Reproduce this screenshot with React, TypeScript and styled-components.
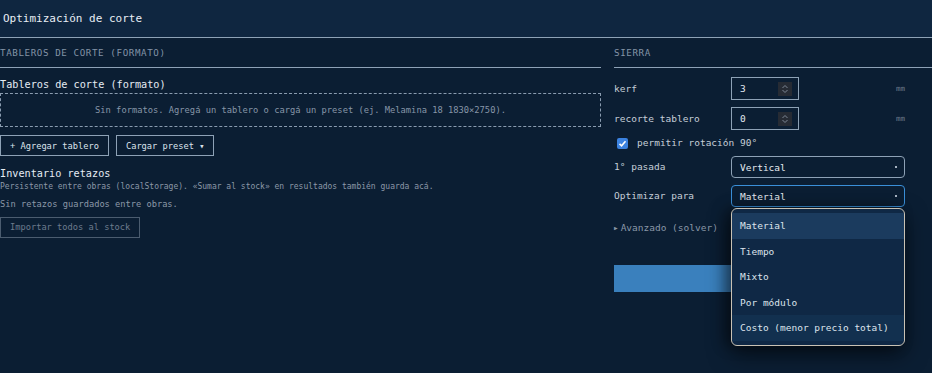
import React from "react";
import styled, { createGlobalStyle } from "styled-components";

const GlobalStyle = createGlobalStyle`
  html, body {
    margin: 0;
    padding: 0;
    background: #0b1e33;
  }
  body {
    font-family: "DejaVu Sans Mono", "Liberation Mono", monospace;
    color: #d9e1ea;
    overflow: hidden;
  }
`;

const Page = styled.div`
  width: 932px;
  height: 373px;
  background: #0b1e33;
`;

const Header = styled.header`
  height: 37px;
  display: flex;
  align-items: center;
  padding-left: 3px;
  background: #0f2640;
  border-bottom: 1px solid #8ea2b6;
  font-size: 11px;
  color: #e8eef5;
`;

const Main = styled.div`
  display: grid;
  grid-template-columns: 601px 1fr;
  column-gap: 13px;
`;

const Column = styled.section`
  display: flex;
  flex-direction: column;
  align-items: flex-start;
`;

const SectionTitle = styled.h2`
  align-self: stretch;
  margin: 0;
  padding: 9px 0 8px;
  line-height: 12px;
  font-size: 9.2px;
  font-weight: normal;
  letter-spacing: 0.6px;
  color: #8394a7;
  border-bottom: 1px solid #8ea2b6;
`;

const BlockTitle = styled.h3<{ $top: number }>`
  margin: ${(p) => p.$top}px 0 0;
  line-height: 12px;
  font-size: 10.2px;
  font-weight: normal;
  color: #e6ecf3;
`;

const EmptyBox = styled.div`
  align-self: stretch;
  margin-top: 2px;
  padding: 10px 0;
  line-height: 12px;
  border: 1px dashed #8a9cb0;
  text-align: center;
  font-size: 8.75px;
  color: #8796a8;
`;

const ButtonRow = styled.div`
  display: flex;
  gap: 7px;
  margin-top: 8px;
`;

const GhostButton = styled.button<{ $disabled?: boolean; $top?: number }>`
  height: 21px;
  margin-top: ${(p) => p.$top ?? 0}px;
  padding: 0 9px;
  background: transparent;
  border: 1px solid ${(p) => (p.$disabled ? "#4b5c6f" : "#8ea2b6")};
  color: ${(p) => (p.$disabled ? "#6c7b8d" : "#dbe3ec")};
  font-family: inherit;
  font-size: 8.7px;
  white-space: nowrap;
`;

const Hint = styled.p<{ $size: number; $top: number }>`
  margin: ${(p) => p.$top}px 0 0;
  font-size: ${(p) => p.$size}px;
  line-height: ${(p) => p.$size + 2}px;
  color: #8b98a8;
`;

const Fields = styled.div`
  align-self: stretch;
  display: grid;
  grid-template-columns: 117px 68px 1fr;
  row-gap: 7px;
  align-items: center;
  margin-top: 9px;
  padding-right: 27px;
  font-size: 9.5px;
  color: #c6ced8;
`;

const Label = styled.span`
  line-height: 12px;
`;

const NumberBox = styled.div`
  height: 23px;
  box-sizing: border-box;
  display: flex;
  align-items: center;
  justify-content: space-between;
  padding: 0 6px 0 8px;
  border: 1px solid #8ea2b6;
  color: #e3e9f0;
`;

const Spinner = styled.span`
  width: 14px;
  height: 14px;
  display: flex;
  align-items: center;
  justify-content: center;
  background: #262b34;
`;

const Unit = styled.span`
  text-align: right;
  font-size: 7.5px;
  color: #6f7d8e;
`;

const CheckRow = styled.label`
  grid-column: 1 / -1;
  display: flex;
  align-items: center;
  gap: 9px;
  padding-left: 3px;
  line-height: 12px;
`;

const CheckBox = styled.span`
  width: 11px;
  height: 11px;
  border-radius: 2px;
  background: #3b82e0;
  display: flex;
  align-items: center;
  justify-content: center;
`;

const SelectWrap = styled.div`
  grid-column: 2 / -1;
  position: relative;
`;

const SelectBox = styled.div<{ $focused?: boolean }>`
  height: 22px;
  box-sizing: border-box;
  display: flex;
  align-items: center;
  justify-content: space-between;
  padding: 0 7px 0 8px;
  border: 1px solid ${(p) => (p.$focused ? "#3a8fd8" : "#8ea2b6")};
  border-radius: 4px;
  color: #e3e9f0;
`;

const Caret = styled.span`
  width: 2px;
  height: 2px;
  background: #a8b4c2;
`;

const Menu = styled.ul`
  position: absolute;
  top: calc(100% + 1px);
  left: 0;
  right: 0;
  z-index: 5;
  margin: 0;
  padding: 4px 0;
  list-style: none;
  background: #0f2845;
  border: 1px solid #c9c2b4;
  border-radius: 6px;
  box-shadow: 0 8px 22px rgba(0, 0, 0, 0.55), -6px 0 14px rgba(0, 0, 0, 0.35);
`;

const MenuItem = styled.li<{ $tone?: "active" | "hover" }>`
  height: 25.5px;
  display: flex;
  align-items: center;
  padding-left: 8px;
  color: #dde4ec;
  background: ${(p) =>
    p.$tone === "active" ? "#1b3b5e" : p.$tone === "hover" ? "#12304f" : "transparent"};
`;

const Advanced = styled.div`
  grid-column: 1 / -1;
  margin-top: 8px;
  display: flex;
  align-items: center;
  gap: 3px;
  line-height: 12px;
  color: #8a97a7;
`;

const Arrow = styled.span`
  font-size: 6px;
`;

const PrimaryButton = styled.button`
  grid-column: 1 / -1;
  height: 27px;
  margin-top: 24px;
  border: none;
  background: #3a80bd;
`;

const Chevrons = () => (
  <svg width="8" height="10" viewBox="0 0 8 10">
    <path d="M1.5 4 L4 1.5 L6.5 4 M1.5 6 L4 8.5 L6.5 6" fill="none" stroke="#7d8796" strokeWidth="1" />
  </svg>
);

const options = ["Material", "Tiempo", "Mixto", "Por módulo", "Costo (menor precio total)"];

const App = () => {
  return (
    <Page>
      <GlobalStyle />
      <Header>Optimización de corte</Header>
      <Main>
        <Column>
          <SectionTitle>TABLEROS DE CORTE (FORMATO)</SectionTitle>
          <BlockTitle $top={11}>Tableros de corte (formato)</BlockTitle>
          <EmptyBox>
            Sin formatos. Agregá un tablero o cargá un preset (ej. Melamina 18 1830×2750).
          </EmptyBox>
          <ButtonRow>
            <GhostButton>+ Agregar tablero</GhostButton>
            <GhostButton>Cargar preset ▾</GhostButton>
          </ButtonRow>
          <BlockTitle $top={12}>Inventario retazos</BlockTitle>
          <Hint $size={8} $top={2}>
            Persistente entre obras (localStorage). «Sumar al stock» en resultados también guarda acá.
          </Hint>
          <Hint $size={8.7} $top={7}>Sin retazos guardados entre obras.</Hint>
          <GhostButton $disabled $top={7}>Importar todos al stock</GhostButton>
        </Column>

        <Column>
          <SectionTitle>SIERRA</SectionTitle>
          <Fields>
            <Label>kerf</Label>
            <NumberBox>
              3
              <Spinner>
                <Chevrons />
              </Spinner>
            </NumberBox>
            <Unit>mm</Unit>

            <Label>recorte tablero</Label>
            <NumberBox>
              0
              <Spinner>
                <Chevrons />
              </Spinner>
            </NumberBox>
            <Unit>mm</Unit>

            <CheckRow>
              <CheckBox>
                <svg width="9" height="9" viewBox="0 0 9 9">
                  <path d="M1.5 4.8 L3.6 6.8 L7.5 2.3" fill="none" stroke="#ffffff" strokeWidth="1.6" />
                </svg>
              </CheckBox>
              permitir rotación 90°
            </CheckRow>

            <Label>1° pasada</Label>
            <SelectWrap>
              <SelectBox>
                Vertical
                <Caret />
              </SelectBox>
            </SelectWrap>

            <Label>Optimizar para</Label>
            <SelectWrap>
              <SelectBox $focused>
                Material
                <Caret />
              </SelectBox>
              <Menu>
                {options.map((o, i) => (
                  <MenuItem
                    key={o}
                    $tone={i === 0 ? "active" : i === options.length - 1 ? "hover" : undefined}
                  >
                    {o}
                  </MenuItem>
                ))}
              </Menu>
            </SelectWrap>

            <Advanced>
              <Arrow>▶</Arrow>
              Avanzado (solver)
            </Advanced>

            <PrimaryButton aria-label="Optimizar" />
          </Fields>
        </Column>
      </Main>
    </Page>
  );
};

export default App;
